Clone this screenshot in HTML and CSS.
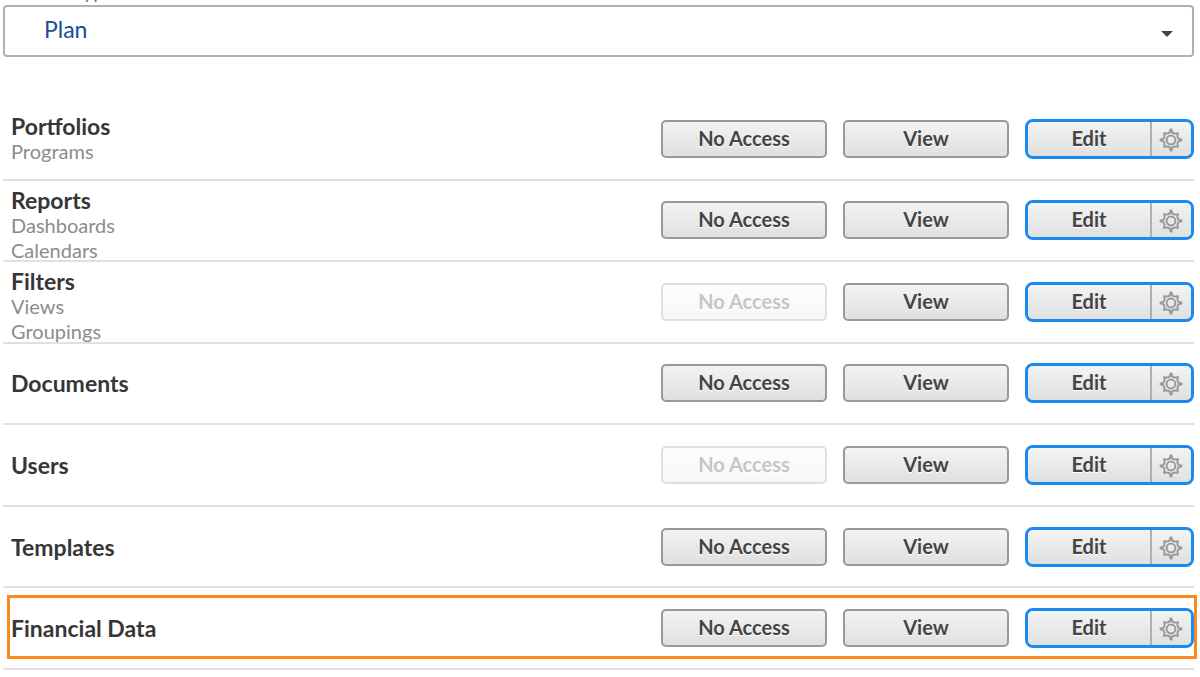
FILE: index.html
```
<!DOCTYPE html>
<html lang="en">
<head>
<meta charset="utf-8">
<title>Access Level</title>
<link rel="stylesheet" href="styles.css">
</head>
<body>
<svg class="sprite" aria-hidden="true">
  <symbol id="gear" viewBox="0 0 24 24">
    <path d="M9.500 5.200Q11.400 4.600 11.500 1.600h1Q12.600 4.600 14.500 5.200Q16 6 18.900 5.100Q18 8 18.800 9.500Q19.400 11.400 22.400 11.500v1Q19.400 12.600 18.800 14.500Q18 16 18.900 18.900Q16 18 14.500 18.800Q12.600 19.400 12.500 22.400h-1Q11.400 19.400 9.500 18.800Q8 18 5.100 18.900Q6 16 5.200 14.500Q4.600 12.600 1.600 12.500v-1Q4.600 11.400 5.200 9.500Q6 8 5.100 5.100Q8 6 9.500 5.200Z"/>
    <circle cx="12" cy="12" r="4.400"/>
  </symbol>
</svg>
<main class="page">
  <label class="type-label" for="type">License Type</label>
  <div class="type">
    <select class="type-select" id="type"><option>Plan</option></select>
    <svg class="type-arrow" viewBox="0 0 12 6" aria-hidden="true"><path d="M0 0h12L6 6z"/></svg>
  </div>
  <ul class="rows">
    <li class="row">
      <div class="info"><h2 class="name">Portfolios</h2><p class="sub">Programs</p></div>
      <div class="actions"><button class="btn">No Access</button><button class="btn">View</button><div class="split"><button class="edit">Edit</button><button class="gear" aria-label="Settings"><svg class="icon"><use href="#gear"/></svg></button></div></div>
    </li>
    <li class="row">
      <div class="info info-tall"><h2 class="name">Reports</h2><p class="sub">Dashboards</p><p class="sub">Calendars</p></div>
      <div class="actions"><button class="btn">No Access</button><button class="btn">View</button><div class="split"><button class="edit">Edit</button><button class="gear" aria-label="Settings"><svg class="icon"><use href="#gear"/></svg></button></div></div>
    </li>
    <li class="row">
      <div class="info info-tall"><h2 class="name">Filters</h2><p class="sub">Views</p><p class="sub">Groupings</p></div>
      <div class="actions"><button class="btn" disabled>No Access</button><button class="btn">View</button><div class="split"><button class="edit">Edit</button><button class="gear" aria-label="Settings"><svg class="icon"><use href="#gear"/></svg></button></div></div>
    </li>
    <li class="row">
      <div class="info"><h2 class="name">Documents</h2></div>
      <div class="actions"><button class="btn">No Access</button><button class="btn">View</button><div class="split"><button class="edit">Edit</button><button class="gear" aria-label="Settings"><svg class="icon"><use href="#gear"/></svg></button></div></div>
    </li>
    <li class="row">
      <div class="info"><h2 class="name">Users</h2></div>
      <div class="actions"><button class="btn" disabled>No Access</button><button class="btn">View</button><div class="split"><button class="edit">Edit</button><button class="gear" aria-label="Settings"><svg class="icon"><use href="#gear"/></svg></button></div></div>
    </li>
    <li class="row">
      <div class="info"><h2 class="name">Templates</h2></div>
      <div class="actions"><button class="btn">No Access</button><button class="btn">View</button><div class="split"><button class="edit">Edit</button><button class="gear" aria-label="Settings"><svg class="icon"><use href="#gear"/></svg></button></div></div>
    </li>
    <li class="row row-marked">
      <div class="info"><h2 class="name">Financial Data</h2></div>
      <div class="actions"><button class="btn">No Access</button><button class="btn">View</button><div class="split"><button class="edit">Edit</button><button class="gear" aria-label="Settings"><svg class="icon"><use href="#gear"/></svg></button></div></div>
    </li>
  </ul>
</main>
</body>
</html>
```
FILE: styles.css
```
* { box-sizing: border-box; }
body {
  margin: 0;
  background: #fff;
  color: #363636;
  font-family: Lato, "Open Sans", sans-serif;
}
.sprite { display: none; }
.page { padding: 0 6px 0 3px; }

.type-label {
  display: block;
  margin-top: -21px;
  font-size: 20px;
  line-height: 24px;
  color: #777;
}
.type { position: relative; margin-top: 2px; }
.type-select {
  display: block;
  width: 100%;
  height: 52px;
  padding: 0 40px 4px 39px;
  border: 2px solid #b0b0b0;
  border-radius: 4px;
  background: #fff;
  color: #1b4c96;
  font: 23px Lato, "Open Sans", sans-serif;
  appearance: none;
}
.type-arrow {
  position: absolute;
  top: 26px;
  right: 21px;
  width: 12px;
  height: 6px;
  fill: #444;
  pointer-events: none;
}

.rows {
  display: grid;
  grid-auto-rows: 1fr;
  min-height: 571px;
  margin: 42px 0 0;
  padding: 0;
  list-style: none;
}
.row {
  position: relative;
  display: flex;
  align-items: center;
  justify-content: space-between;
  padding-left: 8px;
  border-bottom: 2px solid #e0e0e0;
}
.row-marked::after {
  content: "";
  position: absolute;
  inset: 7px -3px 9px 4px;
  border: 3px solid #fb8a1e;
  pointer-events: none;
}
.name {
  margin: 0;
  font-size: 23px;
  font-weight: 700;
  line-height: 26px;
}
.sub {
  margin: 0;
  font-size: 20px;
  line-height: 25px;
  color: #8c8c8c;
}
.info-tall {
  align-self: flex-start;
  padding-top: 6px;
  margin-bottom: -6px;
}

.actions { display: flex; align-items: center; gap: 16px; }
.btn, .edit, .gear {
  margin: 0;
  color: #444;
  background: linear-gradient(#f3f3f3, #e0e0e0);
  font: 700 20px/24px Lato, "Open Sans", sans-serif;
  text-shadow: 0 1px 0 #fff;
}
.btn {
  width: 166px;
  height: 38px;
  padding: 0 0 2px;
  border: 2px solid #999;
  border-radius: 5px;
}
.btn:disabled {
  color: #c6c6c6;
  background: linear-gradient(#fdfdfd, #f7f7f7);
  border-color: #e0e0e0;
}
.split {
  display: flex;
  width: 169px;
  height: 40px;
  border: 3px solid #1a8af0;
  border-radius: 8px;
  overflow: hidden;
}
.edit { flex: 1; padding: 0 0 2px; border: 0; }
.gear {
  display: flex;
  align-items: center;
  justify-content: center;
  width: 41px;
  padding: 2px 1px 0 0;
  border: 0;
  border-left: 2px solid #b0b0b0;
}
.icon {
  width: 24px;
  height: 24px;
  fill: none;
  stroke: #999;
  stroke-width: 2;
  stroke-linejoin: round;
}
```
